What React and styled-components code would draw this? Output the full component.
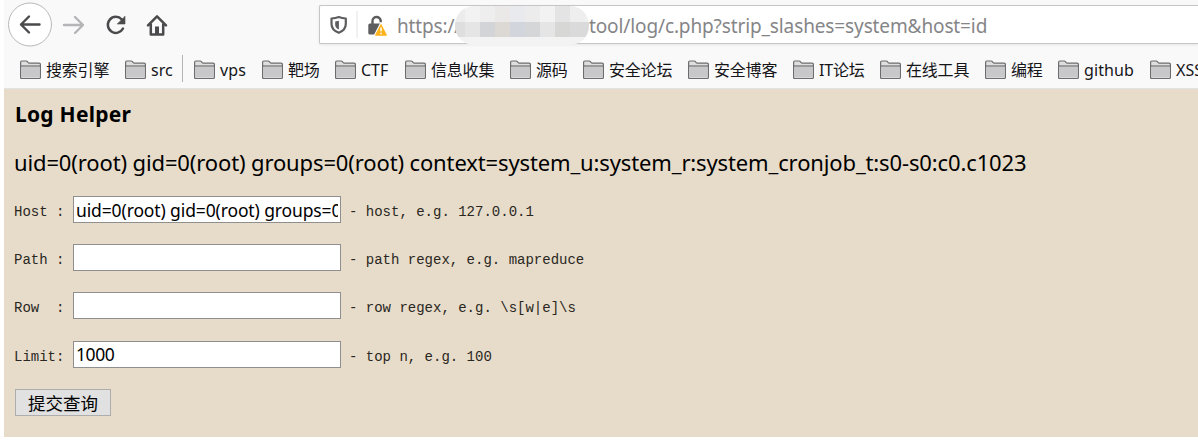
import React from 'react';
import styled, { createGlobalStyle } from 'styled-components';

const Global = createGlobalStyle`
  * { box-sizing: border-box; }
  html, body { margin: 0; padding: 0; background: #fff; overflow: hidden; }
`;

const ui = `'Noto Sans', 'Noto Sans CJK SC', sans-serif`;

const Window = styled.div`
  width: 1198px;
  height: 444px;
  padding: 0 0 7px 4px;
  display: flex;
  flex-direction: column;
  overflow: hidden;
  font-family: ${ui};
`;

const Chrome = styled.header`
  flex: 0 0 89px;
  background: #f9f9fa;
  border-bottom: 1px solid #e1e2e6;
`;

const Toolbar = styled.div`
  display: flex;
  height: 50px;
  padding-left: 4px;
`;

const NavButtons = styled.div`
  width: 311px;
  flex: none;
`;

const UrlBar = styled.div`
  flex: 1;
  height: 39px;
  margin-top: 5px;
  display: flex;
  align-items: center;
  background: #fff;
  border: 1px solid #c6c6c8;
  border-right: 0;
  border-radius: 2px 0 0 2px;
  box-shadow: 0 1px 3px rgba(0, 0, 0, 0.08);
`;

const UrlIcons = styled.svg`
  flex: none;
  display: block;
`;

const UrlText = styled.span`
  flex: none;
  width: ${p => p.$w}px;
  padding-top: 2px;
  font-size: 19px;
  line-height: 34px;
  letter-spacing: ${p => p.$ls}px;
  color: #858587;
  white-space: nowrap;
`;

const Mosaic = styled.div`
  flex: none;
  width: 134px;
  height: 39px;
  margin-top: 2px;
  border-radius: 19px;
  overflow: hidden;
  display: grid;
  grid-template-columns: 10px repeat(8, 15px) 4px;
  grid-template-rows: 16px 15px 8px;
`;

const Tile = styled.i`
  background: ${p => p.$c};
`;

const Bookmarks = styled.nav`
  display: flex;
  height: 38px;
  padding: 5px 0 0 16px;
`;

const Bookmark = styled.div`
  flex: none;
  width: ${p => p.$w}px;
  height: 30px;
  display: flex;
  align-items: center;
  gap: 5px;
  font-size: 16px;
  line-height: 30px;
  letter-spacing: ${p => p.$ls || 0}px;
  color: #151518;
  white-space: nowrap;
`;

const Divider = styled.span`
  flex: none;
  width: 1px;
  height: 27px;
  margin: 0 11px 0 0;
  background: #b4b4b6;
`;

const Page = styled.main`
  flex: 1;
  padding: 10px 0 0 10px;
  background: #e7dcca;
  color: #000;
`;

const Title = styled.h3`
  margin: 0 0 0 1px;
  font-size: 21px;
  line-height: 30px;
  letter-spacing: 0.25px;
`;

const Output = styled.p`
  margin: 17px 0 0;
  font-size: 22px;
  line-height: 32px;
  letter-spacing: -0.13px;
  white-space: nowrap;
`;

const Form = styled.form`
  margin-top: 18px;
`;

const Row = styled.div`
  display: flex;
  align-items: center;
  height: 27px;
  margin-bottom: 21.2px;
`;

const Mono = styled.span`
  width: ${p => p.$w || 'auto'};
  padding-top: 5px;
  font: 14px/18px 'Liberation Mono', monospace;
  color: #2a2722;
  white-space: pre;
`;

const Field = styled.input`
  width: 268px;
  height: 27px;
  margin: 0 8px 0 0;
  padding: 0 2px;
  border: 1px solid #8f8f8f;
  border-radius: 0;
  background: #fff;
  color: #000;
  font: 17.5px ${ui};
  letter-spacing: ${p => p.$ls || 0}px;
  outline: 0;
`;

const Submit = styled.button`
  display: block;
  width: 96px;
  height: 27px;
  margin: 1px 0 0 1px;
  padding: 1px 0 0;
  border: 1px solid #adadad;
  background: #e1e1e1;
  color: #000;
  font: 17.5px/24px ${ui};
`;

const Folder = () => (
  <svg width="21" height="20" viewBox="0 0 21 20" fill="none">
    <path d="M.6 17.500V2.200Q.6 1 1.800 1h4.400q.8 0 1.200.7l.8.900q.4.500 1.200.500h9.800q1.200 0 1.200 1.200v13.200q0 1-1 1H1.600q-1 0-1-1z" fill="#dededf" stroke="#6d6d6f" strokeWidth="1.200" />
    <path d="M2 7h17v10.200H2z" fill="#c8c8ca" />
    <path d="M1 6h19" stroke="#6d6d6f" strokeWidth="1.200" />
  </svg>
);

const bookmarks = [
  ['搜索引擎', 105, -0.2], ['src', 57, 0], null, ['vps', 68, 0.2], ['靶场', 73, -0.2],
  ['CTF', 70, 0], ['信息收集', 105, -0.2], ['源码', 73, -0.2], ['安全论坛', 105, -0.2],
  ['安全博客', 105, -0.2], ['IT论坛', 87, -0.2], ['在线工具', 105, -0.2], ['编程', 73, -0.2],
  ['github', 92, 0.1], ['XSS', 70, 0],
];

const tiles = [
  '#ececec', '#f2f2f2', '#eeeeee', '#eae9e7', '#e9eaee', '#ececec', '#f2f2f2', '#e4e4e4', '#eeeeee', '#f0f0f0',
  '#dedede', '#e5e5e5', '#d3d4d8', '#dcd9d4', '#d2d5dc', '#d5d6d8', '#e5e5e5', '#d7d7d5', '#dadada', '#dadada',
  '#f3f3f3', '#f3f3f3', '#f3f3f3', '#f3f3f3', '#f3f3f3', '#f3f3f3', '#f3f3f3', '#f3f3f3', '#f3f3f3', '#f3f3f3',
];

const rows = [
  ['Host : ', 'uid=0(root) gid=0(root) groups=0(root)', '- host, e.g. 127.0.0.1', -0.12],
  ['Path : ', '', '- path regex, e.g. mapreduce'],
  ['Row  : ', '', '- row regex, e.g. \\s[w|e]\\s'],
  ['Limit: ', '1000', '- top n, e.g. 100', -0.4],
];

export default function App() {
  return (
    <Window>
      <Global />
      <Chrome>
        <Toolbar>
          <NavButtons>
            <svg width="180" height="50" viewBox="8 0 180 50" fill="none" strokeLinecap="round" strokeLinejoin="round">
              <circle cx="30" cy="24.500" r="21.500" fill="#fff" stroke="#b9b9bb" />
              <path d="M39.500 24.500H21M29 16.500l-8 8 8 8" stroke="#4a4a4c" strokeWidth="2.400" />
              <path d="M64 25h18M75 17l8 8-8 8" stroke="#b5b5b7" strokeWidth="2.400" />
              <path d="M123 28.500a8 8 0 1 1-1.200-9" stroke="#4a4a4c" strokeWidth="2.500" />
              <path d="M125 16.500v7.500h-7.500z" fill="#4a4a4c" stroke="#4a4a4c" strokeWidth=".6" />
              <path d="M148 25.300l9-9 9 9M150.800 24.500v10h12.400v-10" stroke="#4a4a4c" strokeWidth="2.500" />
              <path d="M155 34v-7.500h4V34z" fill="#4a4a4c" />
            </svg>
          </NavButtons>
          <UrlBar>
            <UrlIcons width="77" height="37" viewBox="320 6 77 37" fill="none">
              <path d="M331.500 18.500q4-.3 7.300-1.500 3.300 1.200 7 1.500v5.500q0 6-7 8.800-7.300-2.800-7.300-8.800z" stroke="#5d5d5f" strokeWidth="2.200" strokeLinejoin="round" />
              <path d="M338.900 20.800v8.700q-3.700-1.500-3.700-5v-3z" fill="#5d5d5f" />
              <path d="M357 11v27" stroke="#e3e3e5" />
              <path d="M372.500 24v-2.500a4 4 0 0 1 8.200-.8v1.500" stroke="#5d5d5f" strokeWidth="2.400" />
              <rect x="368.300" y="23.500" width="13" height="11" rx="1.500" fill="#5d5d5f" />
              <path d="M381 24.500l5.500 10.700h-11z" fill="#ffb31a" stroke="#fff" strokeWidth="3" strokeLinejoin="round" />
              <path d="M381 24.500l5.500 10.700h-11z" fill="#ffb31a" stroke="#ffb31a" strokeLinejoin="round" />
              <path d="M381 27.500v3.700m0 1.500v1.500" stroke="#fff" strokeWidth="1.500" />
            </UrlIcons>
            <UrlText $w={58} $ls={-0.15}>https://</UrlText>
            <Mosaic>{tiles.map((c, i) => <Tile key={i} $c={c} />)}</Mosaic>
            <UrlText $w={500} $ls={-0.12}>tool/log/c.php?strip_slashes=system&amp;host=id</UrlText>
          </UrlBar>
        </Toolbar>
        <Bookmarks>
          {bookmarks.map((b, i) => b
            ? <Bookmark key={i} $w={b[1]} $ls={b[2]}><Folder />{b[0]}</Bookmark>
            : <Divider key={i} />)}
        </Bookmarks>
      </Chrome>
      <Page>
        <Title>Log Helper</Title>
        <Output>uid=0(root) gid=0(root) groups=0(root) context=system_u:system_r:system_cronjob_t:s0-s0:c0.c1023</Output>
        <Form>
          {rows.map(([label, value, hint, ls]) => (
            <Row key={label}>
              <Mono $w="59px">{label}</Mono>
              <Field defaultValue={value} $ls={ls} />
              <Mono>{hint}</Mono>
            </Row>
          ))}
          <Submit type="button">提交查询</Submit>
        </Form>
      </Page>
    </Window>
  );
}
